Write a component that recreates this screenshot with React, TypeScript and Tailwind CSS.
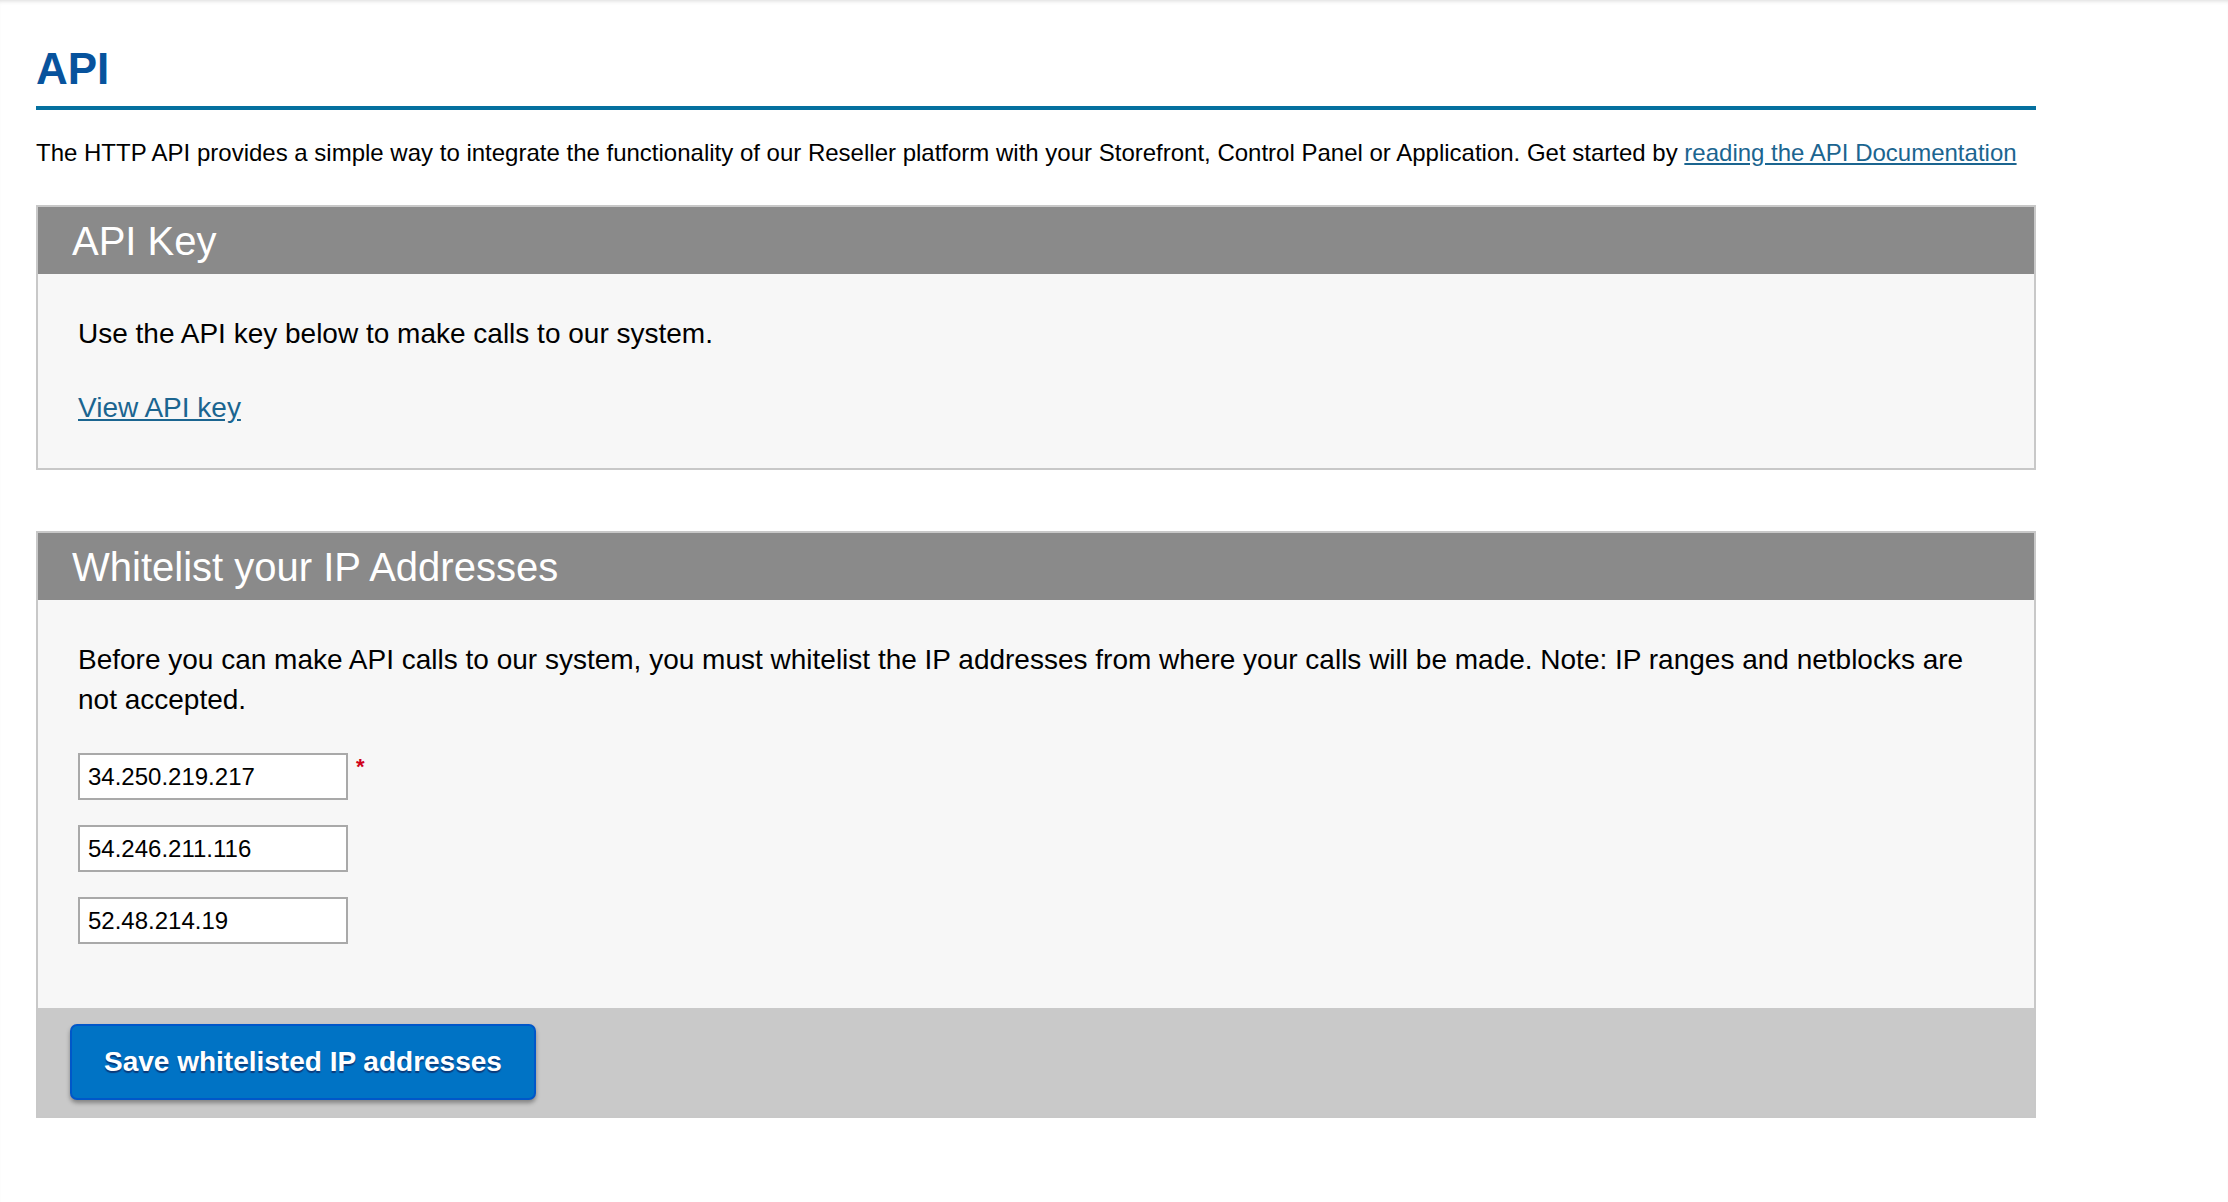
import type { ReactNode } from "react";

const ips = ["34.250.219.217", "54.246.211.116", "52.48.214.19"];

function Panel({ title, children }: { title: string; children: ReactNode }) {
  return (
    <section className="border-2 border-[#c8c8c8]">
      <h2 className="flex h-[67px] items-center bg-[#8a8a8a] px-[34px] text-[40px] leading-[46px] text-white">
        {title}
      </h2>
      {children}
    </section>
  );
}

export default function App() {
  return (
    <div
      className="min-h-screen bg-white pt-[44px] pl-[36px] text-black shadow-[inset_0_4px_4px_-3px_rgba(0,0,0,0.15)]"
      style={{ fontFamily: '"Liberation Sans", Arial, sans-serif' }}
    >
      <div className="w-[2000px]">
        <h1 className="border-b-4 border-[#05709f] pb-[12px] text-[44px] font-bold leading-[50px] text-[#07539d]">
          API
        </h1>
        <p className="mt-[29px] text-[24px] leading-[28px]">
          The HTTP API provides a simple way to integrate the functionality of our Reseller
          platform with your Storefront, Control Panel or Application. Get started by{" "}
          <a href="#" className="text-[#1b6590] underline underline-offset-2">
            reading the API Documentation
          </a>
        </p>

        <div className="mt-[38px]">
          <Panel title="API Key">
            <div className="flex flex-col gap-[34px] bg-[#f7f7f7] px-10 pt-10 pb-[40px] text-[28px] leading-[40px]">
              <p>Use the API key below to make calls to our system.</p>
              <p>
                <a href="#" className="text-[#1b6590] underline underline-offset-2">
                  View API key
                </a>
              </p>
            </div>
          </Panel>
        </div>

        <div className="mt-[61px]">
          <Panel title="Whitelist your IP Addresses">
            <div className="bg-[#f7f7f7] px-10 pt-10 pb-[64px]">
              <p className="max-w-[1900px] text-[28px] leading-[40px]">
                Before you can make API calls to our system, you must whitelist the IP addresses
                from where your calls will be made. Note: IP ranges and netblocks are not accepted.
              </p>
              <div className="mt-[33px] flex flex-col gap-[25px]">
                {ips.map((ip, i) => (
                  <div key={ip} className="flex items-start gap-[8px]">
                    <input
                      defaultValue={ip}
                      className="h-[47px] w-[270px] border-2 border-[#a9a9a9] bg-white px-[8px] text-[24px] text-black outline-none"
                    />
                    {i === 0 && (
                      <span className="mt-[3px] text-[22px] font-bold leading-none text-[#d0011b]">*</span>
                    )}
                  </div>
                ))}
              </div>
            </div>
            <div className="bg-[#c9c9c9] px-8 py-4">
              <button
                type="button"
                className="h-[76px] rounded-[7px] border-2 border-[#0057c9] bg-[#0073c5] px-[32px] text-[28px] font-bold text-white shadow-[0_3px_4px_rgba(0,0,0,0.35)] [text-shadow:0_2px_1px_#0a3a7a]"
              >
                Save whitelisted IP addresses
              </button>
            </div>
          </Panel>
        </div>
      </div>
    </div>
  );
}
